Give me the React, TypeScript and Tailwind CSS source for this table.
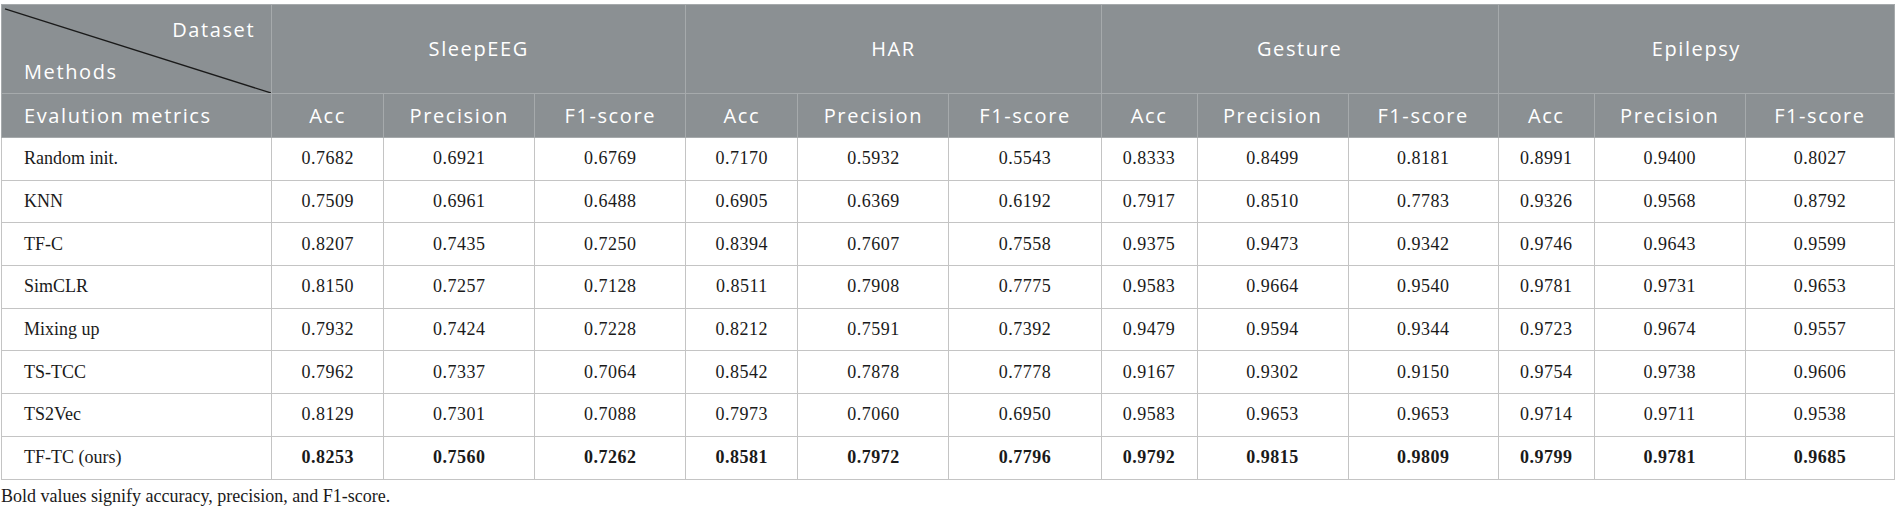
import React from 'react';

type Row = { name: string; values: string[]; bold?: boolean };

const groups = ['SleepEEG', 'HAR', 'Gesture', 'Epilepsy'];
const metrics = ['Acc', 'Precision', 'F1-score'];
const colWidths = [270, 112, 151, 151, 112, 151, 152, 96, 151, 150, 96, 151, 149];

const rows: Row[] = [
  { name: 'Random init.', values: ['0.7682', '0.6921', '0.6769', '0.7170', '0.5932', '0.5543', '0.8333', '0.8499', '0.8181', '0.8991', '0.9400', '0.8027'] },
  { name: 'KNN', values: ['0.7509', '0.6961', '0.6488', '0.6905', '0.6369', '0.6192', '0.7917', '0.8510', '0.7783', '0.9326', '0.9568', '0.8792'] },
  { name: 'TF-C', values: ['0.8207', '0.7435', '0.7250', '0.8394', '0.7607', '0.7558', '0.9375', '0.9473', '0.9342', '0.9746', '0.9643', '0.9599'] },
  { name: 'SimCLR', values: ['0.8150', '0.7257', '0.7128', '0.8511', '0.7908', '0.7775', '0.9583', '0.9664', '0.9540', '0.9781', '0.9731', '0.9653'] },
  { name: 'Mixing up', values: ['0.7932', '0.7424', '0.7228', '0.8212', '0.7591', '0.7392', '0.9479', '0.9594', '0.9344', '0.9723', '0.9674', '0.9557'] },
  { name: 'TS-TCC', values: ['0.7962', '0.7337', '0.7064', '0.8542', '0.7878', '0.7778', '0.9167', '0.9302', '0.9150', '0.9754', '0.9738', '0.9606'] },
  { name: 'TS2Vec', values: ['0.8129', '0.7301', '0.7088', '0.7973', '0.7060', '0.6950', '0.9583', '0.9653', '0.9653', '0.9714', '0.9711', '0.9538'] },
  { name: 'TF-TC (ours)', bold: true, values: ['0.8253', '0.7560', '0.7262', '0.8581', '0.7972', '0.7796', '0.9792', '0.9815', '0.9809', '0.9799', '0.9781', '0.9685'] },
];

export default function App() {
  return (
    <div className="w-[1900px] h-[513px] bg-white pt-[4px] pl-[1px]">
      <table className="table-fixed border-collapse w-[1894px]">
        <colgroup>
          {colWidths.map((w, i) => (
            <col key={i} style={{ width: w }} />
          ))}
        </colgroup>
        <thead className="bg-[#8b9093] text-white text-[20px] tracking-[1.6px] font-['Open_Sans',sans-serif]">
          <tr className="h-[89px] border-t border-[#d8dadb]">
            <th className="relative border border-[#a6aaac] p-0 font-normal align-top">
              <svg className="absolute inset-0 w-full h-full" viewBox="0 0 270 89" preserveAspectRatio="none">
                <line x1="3" y1="4" x2="270" y2="89" stroke="#1a1a1a" strokeWidth="1.3" />
              </svg>
              <div className="flex flex-col h-[88px] justify-between pt-[11px] pb-[7px]">
                <span className="text-right pr-[16px] leading-[28px]">Dataset</span>
                <span className="text-left pl-[22px] leading-[28px]">Methods</span>
              </div>
            </th>
            {groups.map(g => (
              <th key={g} colSpan={3} className="border border-[#a6aaac] font-normal text-center">
                {g}
              </th>
            ))}
          </tr>
          <tr className="h-[44px]">
            <th className="border border-[#a6aaac] font-normal text-left pl-[22px]">Evalution metrics</th>
            {groups.map(g =>
              metrics.map(m => (
                <th key={g + m} className="border border-[#a6aaac] font-normal text-center">
                  {m}
                </th>
              ))
            )}
          </tr>
        </thead>
        <tbody className="font-['Liberation_Serif',serif] text-[18px] text-[#1a1a1a]">
          {rows.map(r => (
            <tr key={r.name} className="h-[42.7px]">
              <td className="border-[1.5px] border-[#c4c4c4] text-left pl-[22px]">{r.name}</td>
              {r.values.map((v, i) => (
                <td key={i} className={`border-[1.5px] border-[#c4c4c4] text-center tracking-[0.5px] ${r.bold ? 'font-bold' : ''}`}>
                  {v}
                </td>
              ))}
            </tr>
          ))}
        </tbody>
      </table>
      <p className="mt-[6px] font-['Liberation_Serif',serif] text-[18px] text-[#1a1a1a] leading-[20px]">
        Bold values signify accuracy, precision, and F1-score.
      </p>
    </div>
  );
}
